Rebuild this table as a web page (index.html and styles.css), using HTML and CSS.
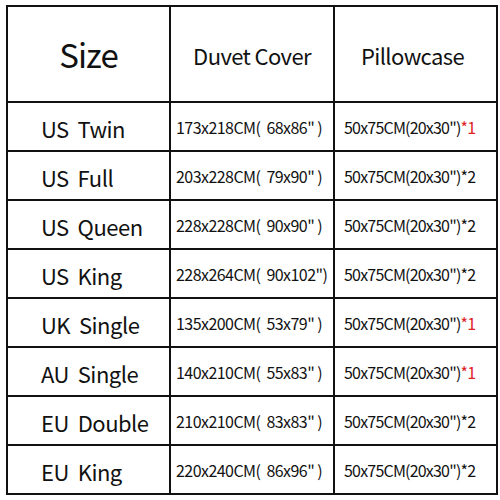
FILE: index.html
```html
<!DOCTYPE html>
<html>
<head>
<meta charset="utf-8">
<link rel="stylesheet" href="styles.css">
</head>
<body>
<table class="chart">
  <colgroup><col class="c1"><col class="c2"><col class="c3"></colgroup>
  <thead>
    <tr class="head">
      <th class="h-size">Size</th>
      <th class="h-col">Duvet Cover</th>
      <th class="h-col">Pillowcase</th>
    </tr>
  </thead>
  <tbody>
    <tr><td class="label">US  Twin</td><td class="duvet">173x218CM(  68x86" )</td><td class="pillow">50x75CM(20x30")<span class="red">*1</span></td></tr>
    <tr><td class="label">US  Full</td><td class="duvet">203x228CM(  79x90" )</td><td class="pillow">50x75CM(20x30")*2</td></tr>
    <tr><td class="label">US  Queen</td><td class="duvet">228x228CM(  90x90" )</td><td class="pillow">50x75CM(20x30")*2</td></tr>
    <tr><td class="label">US  King</td><td class="duvet">228x264CM(  90x102")</td><td class="pillow">50x75CM(20x30")*2</td></tr>
    <tr><td class="label">UK  Single</td><td class="duvet">135x200CM(  53x79" )</td><td class="pillow">50x75CM(20x30")<span class="red">*1</span></td></tr>
    <tr><td class="label">AU  Single</td><td class="duvet">140x210CM(  55x83" )</td><td class="pillow">50x75CM(20x30")<span class="red">*1</span></td></tr>
    <tr><td class="label">EU  Double</td><td class="duvet">210x210CM(  83x83" )</td><td class="pillow">50x75CM(20x30")*2</td></tr>
    <tr><td class="label">EU  King</td><td class="duvet">220x240CM(  86x96" )</td><td class="pillow">50x75CM(20x30")*2</td></tr>
  </tbody>
</table>
</body>
</html>
```
FILE: styles.css
```css
html, body {
  margin: 0;
  padding: 0;
  background: #fff;
}
body {
  padding: 5px 0 0 6px;
  font-family: "Noto Sans CJK KR", "Noto Sans", sans-serif;
  color: #111;
}
.chart {
  border-collapse: collapse;
  table-layout: fixed;
  width: 490px;
}
.c1 { width: 163px; }
.c2 { width: 164px; }
.c3 { width: 163px; }
.chart th, .chart td {
  border: 2px solid #111;
  padding: 0;
  white-space: pre;
  overflow: hidden;
  line-height: 1.2;
}
.chart .head th {
  height: 92px;
  font-weight: normal;
  text-align: center;
  padding-top: 2px;
}
.chart .h-size {
  font-size: 33px;
  letter-spacing: -1px;
}
.chart .h-col {
  font-size: 22px;
  letter-spacing: -0.6px;
}
.chart .h-col + .h-col {
  padding-right: 6px;
}
.chart tbody td {
  height: 44px;
  padding-top: 3px;
}
.chart .label {
  font-size: 22px;
  padding-left: 33px;
  letter-spacing: -0.5px;
}
.chart .duvet {
  font-size: 16px;
  padding-left: 5px;
  letter-spacing: -0.55px;
}
.chart .pillow {
  font-size: 16px;
  padding-left: 9px;
  letter-spacing: -0.8px;
}
.red { color: #e0221f; }
```
